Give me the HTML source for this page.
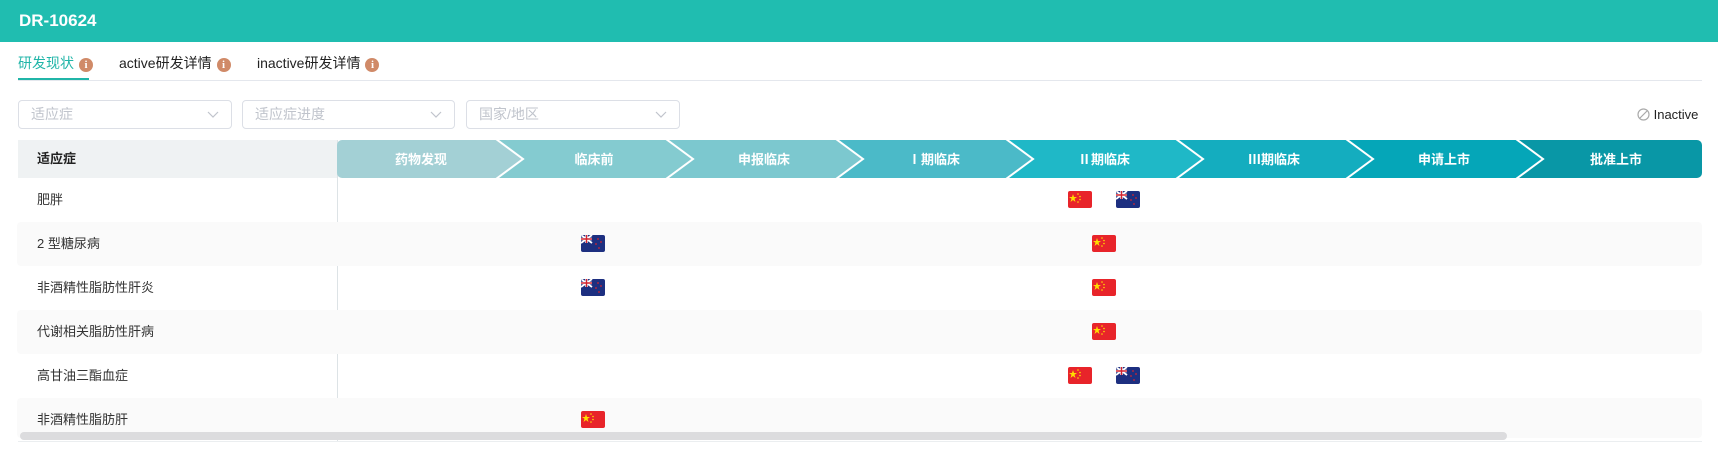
<!DOCTYPE html>
<html><head><meta charset="utf-8"><style>
*{margin:0;padding:0;box-sizing:border-box}
body{width:1718px;height:456px;background:#fff;font-family:"Liberation Sans","Noto Sans CJK SC",sans-serif;position:relative;overflow:hidden;color:#333}
.hdr{position:absolute;left:0;top:0;width:1718px;height:42px;background:#20bdb0;color:#fff;font-weight:bold;font-size:17px;line-height:42px;padding-left:19px}
.tab{position:absolute;top:53px;font-size:14px;line-height:20px;color:#222}
.info{display:inline-block;width:14px;height:14px;border-radius:50%;background:#d08a68;color:#fff;font-size:11px;font-weight:bold;line-height:14px;text-align:center;vertical-align:0px;margin-left:5px;font-family:"Liberation Serif",serif}
.sel{position:absolute;top:100px;height:29px;border:1px solid #dcdfe6;border-radius:4px;font-size:14px;color:#c0c4cc;line-height:27px;padding-left:12px}
.sel svg{position:absolute;right:12px;top:10px}
.row{position:absolute;left:17px;width:1685px;height:44px;font-size:13px;line-height:44px;padding-left:20px}
.alt{background:#fafafa;border-radius:4px}
.flag{position:absolute;width:24px;height:17px;border-radius:2px;overflow:hidden}
</style></head><body>
<div class="hdr">DR-10624</div>
<div class="tab" style="left:18px;color:#20b5a8">研发现状<span class="info">i</span></div>
<div class="tab" style="left:119px">active研发详情<span class="info">i</span></div>
<div class="tab" style="left:257px">inactive研发详情<span class="info">i</span></div>
<div style="position:absolute;left:18px;top:80px;width:1684px;height:1px;background:#e4e7ed"></div>
<div style="position:absolute;left:18px;top:78px;width:71px;height:2px;background:#20b5a8"></div>

<div class="sel" style="left:18px;width:214px">适应症<svg width="12" height="8"><path d="M1 1l5 5 5-5" fill="none" stroke="#c0c4cc" stroke-width="1.2"/></svg></div>
<div class="sel" style="left:242px;width:213px">适应症进度<svg width="12" height="8"><path d="M1 1l5 5 5-5" fill="none" stroke="#c0c4cc" stroke-width="1.2"/></svg></div>
<div class="sel" style="left:466px;width:214px">国家/地区<svg width="12" height="8"><path d="M1 1l5 5 5-5" fill="none" stroke="#c0c4cc" stroke-width="1.2"/></svg></div>

<div style="position:absolute;left:1637px;top:107px;font-size:13px;color:#222;line-height:16px"><svg width="13" height="13" style="vertical-align:-2px"><circle cx="6.5" cy="6.5" r="5.5" fill="none" stroke="#aaa" stroke-width="1.2"/><path d="M3 10L10 3" stroke="#aaa" stroke-width="1.2"/></svg> Inactive</div>

<div style="position:absolute;left:18px;top:140px;width:319px;height:38px;background:#eff2f3;font-weight:bold;font-size:13px;line-height:38px;padding-left:19px;color:#222">适应症</div>
<div style="position:absolute;left:337px;top:140px;width:1px;height:302px;background:#dde3e6"></div>

<div class="row" style="top:178px">肥胖</div>
<div class="row alt" style="top:222px">2 型糖尿病</div>
<div class="row" style="top:266px">非酒精性脂肪性肝炎</div>
<div class="row alt" style="top:310px">代谢相关脂肪性肝病</div>
<div class="row" style="top:354px">高甘油三酯血症</div>
<div class="row alt" style="top:398px;height:40px">非酒精性脂肪肝</div>

<svg style="position:absolute;left:0;top:0" width="1718" height="200">
<defs><clipPath id="c"><rect x="337" y="140" width="1365" height="38" rx="5"/></clipPath></defs>
<g clip-path="url(#c)">
<rect x="330" y="140" width="200" height="38" fill="#a3d0d5"/>
<polygon points="496,140 666,140 693,159 666,178 496,178 523,159" fill="#84cbd0"/>
<polygon points="666,140 836,140 863,159 836,178 666,178 693,159" fill="#7cc8cf"/>
<polygon points="836,140 1006,140 1033,159 1006,178 836,178 863,159" fill="#4bbac8"/>
<polygon points="1006,140 1176,140 1203,159 1176,178 1006,178 1033,159" fill="#1fb8c7"/>
<polygon points="1176,140 1346,140 1373,159 1346,178 1176,178 1203,159" fill="#14adbf"/>
<polygon points="1346,140 1516,140 1543,159 1516,178 1346,178 1373,159" fill="#05a6b8"/>
<polygon points="1516,140 1720,140 1720,178 1516,178 1543,159" fill="#0997a6"/>
<g fill="none" stroke="#fff" stroke-width="2">
<polyline points="496,139 523,159 496,179"/><polyline points="666,139 693,159 666,179"/><polyline points="836,139 863,159 836,179"/><polyline points="1006,139 1033,159 1006,179"/><polyline points="1176,139 1203,159 1176,179"/><polyline points="1346,139 1373,159 1346,179"/><polyline points="1516,139 1543,159 1516,179"/>
</g></g>
<g fill="#fff" font-size="13" font-weight="bold" text-anchor="middle" font-family="Liberation Sans,Noto Sans CJK SC,sans-serif">
<text x="421" y="164">药物发现</text><text x="594" y="164">临床前</text><text x="764" y="164">申报临床</text><text x="934" y="164">Ⅰ期临床</text><text x="1104" y="164">Ⅱ期临床</text><text x="1274" y="164">Ⅲ期临床</text><text x="1444" y="164">申请上市</text><text x="1616" y="164">批准上市</text>
</g>
</svg>

<svg width="0" height="0" style="position:absolute"><defs>
<g id="cn"><rect width="24" height="17" fill="#e8242a"/><polygon points="5,3 6,6 9,6 6.5,7.8 7.5,11 5,9 2.5,11 3.5,7.8 1,6 4,6" fill="#ffde00"/><circle cx="10" cy="3" r=".8" fill="#ffde00"/><circle cx="12" cy="5.5" r=".8" fill="#ffde00"/><circle cx="12" cy="8.5" r=".8" fill="#ffde00"/><circle cx="10" cy="11" r=".8" fill="#ffde00"/></g>
<g id="nz"><rect width="24" height="17" fill="#1d2f80"/><rect width="11" height="8" fill="#1d2f80"/><path d="M0 0L11 8M11 0L0 8" stroke="#fff" stroke-width="1.8"/><path d="M5.5 0V8M0 4H11" stroke="#fff" stroke-width="2.6"/><path d="M5.5 0V8M0 4H11" stroke="#d2232f" stroke-width="1.4"/><circle cx="17" cy="4" r=".9" fill="#d2232f"/><circle cx="20" cy="7" r=".9" fill="#d2232f"/><circle cx="15" cy="9" r=".9" fill="#d2232f"/><circle cx="18" cy="13" r=".9" fill="#d2232f"/></g>
</defs></svg>

<svg class="flag" style="left:1068px;top:191px"><use href="#cn"/></svg>
<svg class="flag" style="left:1116px;top:191px"><use href="#nz"/></svg>
<svg class="flag" style="left:581px;top:235px"><use href="#nz"/></svg>
<svg class="flag" style="left:1092px;top:235px"><use href="#cn"/></svg>
<svg class="flag" style="left:581px;top:279px"><use href="#nz"/></svg>
<svg class="flag" style="left:1092px;top:279px"><use href="#cn"/></svg>
<svg class="flag" style="left:1092px;top:323px"><use href="#cn"/></svg>
<svg class="flag" style="left:1068px;top:367px"><use href="#cn"/></svg>
<svg class="flag" style="left:1116px;top:367px"><use href="#nz"/></svg>
<svg class="flag" style="left:581px;top:411px"><use href="#cn"/></svg>

<div style="position:absolute;left:20px;top:432px;width:1487px;height:8px;border-radius:4px;background:#dcdcde"></div>
<div style="position:absolute;left:18px;top:441px;width:1684px;height:1px;background:#ebeef0"></div>
</body></html>
